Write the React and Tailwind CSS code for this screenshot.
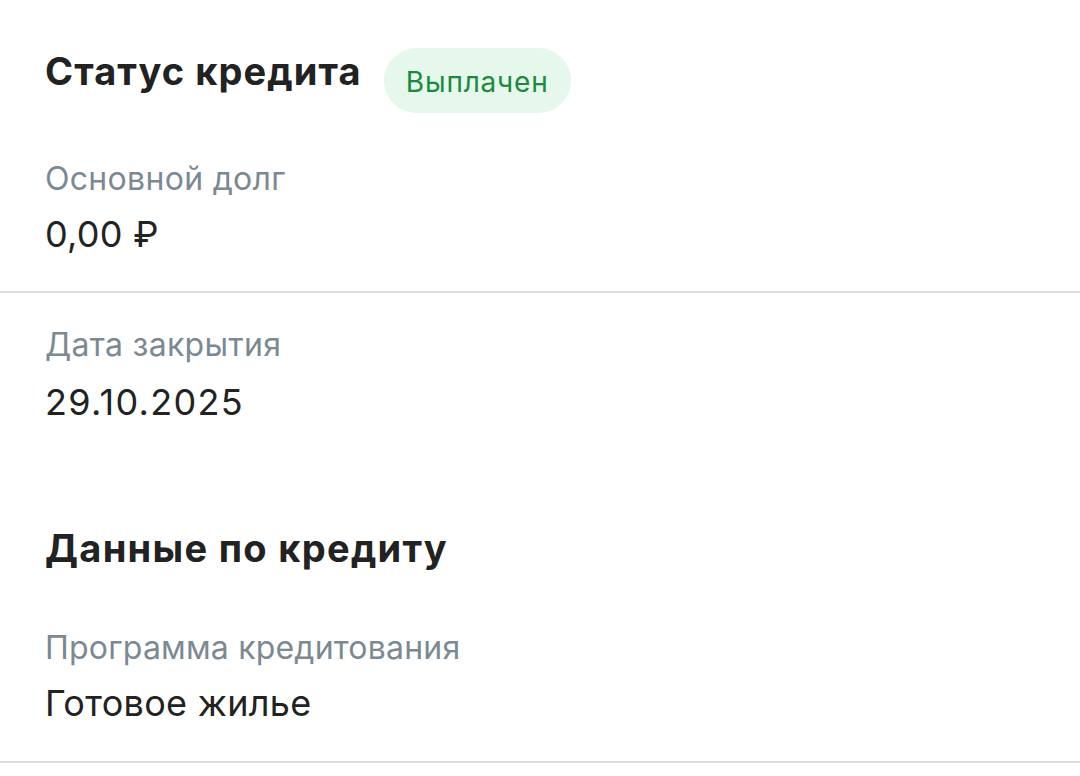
export default function App() {
  return (
    <div className="w-[1080px] h-[776px] bg-white overflow-hidden" style={{ fontFamily: 'Inter, "Noto Sans", sans-serif' }}>
      <div className="px-[45px] pt-[48px]">
        <div className="flex items-start gap-[22px]">
          <h1 className="text-[38px] leading-[46px] font-bold tracking-[1.1px] text-[#222222]">Статус кредита</h1>
          <span className="h-[65px] w-[187px] pt-[2px] rounded-full bg-[#e6f7eb] text-[#1a8a3e] text-[28px] tracking-[0.8px] flex items-center justify-center">Выплачен</span>
        </div>
        <div className="mt-[46px] text-[32px] leading-[40px] tracking-[0.3px] text-[#7b8993]">Основной долг</div>
        <div className="mt-[13px] text-[36px] leading-[44px] tracking-[0.3px] text-[#222222]">0,00 ₽</div>
      </div>
      <div className="mt-[35px] h-[2px] bg-[#dcdcdc]" />
      <div className="px-[45px]">
        <div className="mt-[32px] text-[32px] leading-[40px] tracking-[0.3px] text-[#7b8993]">Дата закрытия</div>
        <div className="mt-[15px] text-[36px] leading-[44px] tracking-[1.3px] text-[#222222]">29.10.2025</div>
        <h2 className="mt-[101px] text-[38px] leading-[46px] font-bold tracking-[1.3px] text-[#222222]">Данные по кредиту</h2>
        <div className="mt-[57px] text-[32px] leading-[40px] tracking-[0.2px] text-[#7b8993]">Программа кредитования</div>
        <div className="mt-[13px] text-[36px] leading-[44px] tracking-[0.3px] text-[#222222]">Готовое жилье</div>
      </div>
      <div className="mt-[36px] h-[2px] bg-[#dcdcdc]" />
    </div>
  );
}
